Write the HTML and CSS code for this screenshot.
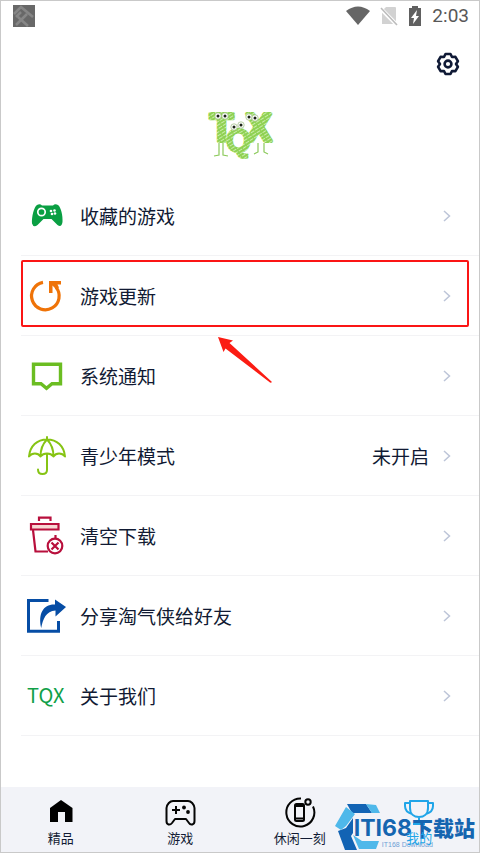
FILE: index.html
```html
<!DOCTYPE html>
<html lang="zh-CN">
<head>
<meta charset="utf-8">
<meta name="viewport" content="width=device-width, initial-scale=1">
<title>我的</title>
<link rel="stylesheet" href="styles.css">
</head>
<body>
<div class="app">
  <header class="status">
    <svg class="status-app" width="22" height="22" viewBox="0 0 22 22" aria-hidden="true"><path fill="#686868" d="M0 0h22v22H0z"/><path d="M1 9 8 2l12 10M3 12l5-5M14 9 3 20M5 12l10 9" fill="none" stroke="#868686" stroke-width="2.6"/></svg>
    <div class="status-icons">
      <svg width="24" height="20" viewBox="0 0 24 20" aria-hidden="true"><path fill="#666" d="M0 5Q12-4 24 5L12 19z"/></svg>
      <svg width="18" height="20" viewBox="0 0 18 20" aria-hidden="true"><path fill="#d2d2d2" d="M6 1h9q1 0 1 1v16H2V5z"/><path d="m0 2 17 17" stroke="#fff" stroke-width="4"/><path d="m1 2 16 17" stroke="#bcbcbc" stroke-width="1.6"/></svg>
      <svg width="14" height="20" viewBox="0 0 14 20" aria-hidden="true"><path fill="#606060" d="M4 0h6v2h3v18H1V2h3z"/><path fill="#fff" d="m9 4-6 8h3l-1 6 6-8H8z"/></svg>
      <time class="clock">2:03</time>
    </div>
  </header>
  <div class="toolbar">
    <button class="settings" type="button" aria-label="设置">
      <svg width="26" height="26" viewBox="0 0 26 26" fill="none" stroke="#101a36" aria-hidden="true"><path stroke-width="2.600" stroke-linejoin="round" d="M10.500 3h5L17 6l3.400-.1 2.500 4.300L21 13l1.900 2.800-2.500 4.300L17 20l-1.500 3h-5L9 20l-3.400.1-2.500-4.300L5 13l-1.900-2.800 2.500-4.300L9 6z"/><circle cx="13" cy="13" r="3.400" stroke-width="2.600"/></svg>
    </button>
  </div>
  <main class="main">
    <div class="brand">
      <svg width="80" height="56" viewBox="-4 0 80 56" role="img" aria-label="TQX">
        <defs><pattern id="hatch" width="5" height="3" patternUnits="userSpaceOnUse" patternTransform="rotate(-32)"><path fill="#8fd152" d="M0 0h5v3H0z"/><path fill="#c9ecab" d="M0 0h4v1H0z"/></pattern></defs>
        <g fill="url(#hatch)" stroke="url(#hatch)" stroke-linejoin="round" class="brand-letters">
          <text x="6" y="36" font-size="38" stroke-width="4">T</text>
          <text x="22" y="46" font-size="32" stroke-width="2">Q</text>
          <text x="42" y="36" font-size="38" stroke-width="4">X</text>
        </g>
        <g fill="#fff" stroke="#9bbb80" stroke-width=".7"><circle cx="14" cy="11" r="3.200"/><circle cx="21" cy="11" r="3.200"/><circle cx="30" cy="22" r="3.200"/><circle cx="37" cy="20" r="3.200"/><circle cx="45" cy="12" r="3.200"/><circle cx="51" cy="13" r="3.200"/></g>
        <g fill="#1c2416"><circle cx="14" cy="11" r="1.500"/><circle cx="21" cy="11" r="1.500"/><circle cx="30" cy="22" r="1.500"/><circle cx="37" cy="20" r="1.500"/><circle cx="45" cy="12" r="1.500"/><circle cx="51" cy="13" r="1.500"/></g>
        <path fill="none" stroke="#8bc95a" stroke-width="1.200" d="M15 38v12l-5 1M19 38v12l5 1M54 38v9l-4 2M60 38v9l4 2"/>
      </svg>
    </div>
    <ul class="menu">
      <li class="item"><a class="row" href="#favorites">
        <svg class="icon" viewBox="0 0 40 40" aria-hidden="true"><path fill="#0a9f43" d="M10 9q3-1.500 5 .5h11q2-2 5-.5c3 2 5 11 4.500 17q-1 6-5 3l-6-6h-8l-6 6q-4 3-5.500-1.500C4.500 21 7 11 10 9z"/><circle cx="14.500" cy="16" r="3.700" fill="none" stroke="#fff" stroke-width="1.700"/><g fill="#fff"><circle cx="24" cy="15" r="1.300"/><circle cx="27.500" cy="14.500" r="1.300"/><circle cx="25" cy="18" r="1.300"/><circle cx="28" cy="17.500" r="1.300"/></g></svg>
        <span class="label">收藏的游戏</span>
        <svg class="chevron" viewBox="0 0 8 12" aria-hidden="true"><path d="m1 1 5.500 5L1 11"/></svg></a></li>
      <li class="item item-marked"><a class="row" href="#updates">
        <svg class="icon" viewBox="0 0 40 40" aria-hidden="true"><path fill="none" stroke="#ef7308" stroke-width="3.200" d="M16 6.400A13.800 13.800 0 1 0 29 11.200"/><path fill="#ef7308" d="M22 5h12v3.600h-3.500l1.500 3-3 1.600-3.500-3.600v7.400H22z"/></svg>
        <span class="label">游戏更新</span>
        <svg class="chevron" viewBox="0 0 8 12" aria-hidden="true"><path d="m1 1 5.500 5L1 11"/></svg></a>
        <svg class="pointer" viewBox="0 0 54 46" aria-hidden="true"><path fill="#fb1c13" d="m0 0 15 3.500-3.500 2.500L54 45q-1 1-2 .5L7.500 11.500 5.500 15z"/></svg></li>
      <li class="item"><a class="row" href="#notices">
        <svg class="icon" viewBox="0 0 40 40" aria-hidden="true"><path fill="none" stroke="#6bbd22" stroke-width="3.400" d="M6.500 8.200h27v19.500H25l-5.500 4.500-5.500-4.500H6.500z"/></svg>
        <span class="label">系统通知</span>
        <svg class="chevron" viewBox="0 0 8 12" aria-hidden="true"><path d="m1 1 5.500 5L1 11"/></svg></a></li>
      <li class="item"><a class="row" href="#teen">
        <svg class="icon" viewBox="0 0 40 40" fill="none" stroke="#86c414" stroke-width="2" stroke-linecap="round" stroke-linejoin="round" aria-hidden="true"><path d="M2 20.500C3 10 10 3.500 20 3.500S37 10 38 20.500c-3-4-9-4-11.500 0-3-4-10-4-13 0-2.500-4-8.500-4-11.500 0zM20 1v2.500M20 17.500V34q0 4-4.500 4T11 33.500M20 3.500c-4 4-6.500 9-6.500 17M20 3.500c4 4 6.500 9 6.500 17"/></svg>
        <span class="label">青少年模式</span><span class="value">未开启</span>
        <svg class="chevron" viewBox="0 0 8 12" aria-hidden="true"><path d="m1 1 5.500 5L1 11"/></svg></a></li>
      <li class="item"><a class="row" href="#clear">
        <svg class="icon" viewBox="0 0 40 40" fill="none" stroke="#b80f3c" stroke-width="2.200" aria-hidden="true"><path d="M12 5V1.700h11.500V5"/><path fill="#f7d6d3" d="M4 8h27.500v5.500H4z"/><path d="m6 14 2.500 21.500H21M28.500 19v4"/><circle cx="28" cy="30" r="7.300"/><path d="m24.500 26.500 7 7m0-7-7 7"/></svg>
        <span class="label">清空下载</span>
        <svg class="chevron" viewBox="0 0 8 12" aria-hidden="true"><path d="m1 1 5.500 5L1 11"/></svg></a></li>
      <li class="item"><a class="row" href="#share">
        <svg class="icon" viewBox="0 0 40 40" aria-hidden="true"><path fill="none" stroke="#064da5" stroke-width="3" d="M21.500 4.500h-20v30.700h30V25"/><path fill="#064da5" d="M28 3.500 39 11l-10.500 9.500v-6C19 15 16 23 14.200 32 11 18 16 8 28 8.500z"/></svg>
        <span class="label">分享淘气侠给好友</span>
        <svg class="chevron" viewBox="0 0 8 12" aria-hidden="true"><path d="m1 1 5.500 5L1 11"/></svg></a></li>
      <li class="item"><a class="row" href="#about">
        <span class="icon icon-text">TQX</span>
        <span class="label">关于我们</span>
        <svg class="chevron" viewBox="0 0 8 12" aria-hidden="true"><path d="m1 1 5.500 5L1 11"/></svg></a></li>
    </ul>
  </main>
  <nav class="tabs">
    <a class="tab" href="#home"><svg width="32" height="32" viewBox="0 0 32 32" aria-hidden="true"><path d="M16 4 27.500 12v14H20V16h-7v10H5V12z"/></svg>精品</a>
    <a class="tab" href="#games"><svg width="32" height="32" viewBox="0 0 32 32" fill="none" stroke="#050505" stroke-width="2" stroke-linejoin="round" aria-hidden="true"><path d="M9 5h15c3 0 6 3 6.500 7v13c0 4-4 4.500-5.500 2l-3-4H11l-3 4c-2 2.500-5.500 2-5.500-2V12C3 8 6 5 9 5z"/><path d="M12 10v8M8 14h8"/><g fill="#050505" stroke="none"><circle cx="20" cy="11.500" r="1.900"/><circle cx="24" cy="16" r="1.900"/></g></svg>游戏</a>
    <a class="tab" href="#leisure"><svg width="32" height="32" viewBox="0 0 32 32" fill="none" stroke="#050505" stroke-width="2" aria-hidden="true"><path d="M17 2.500a14 14 0 1 0 12 8"/><circle cx="24" cy="6" r="2.700"/><rect x="11" y="8" width="9" height="17" rx="1.500"/><path d="M11 22.500h9M11 10h9"/></svg>休闲一刻</a>
    <a class="tab tab-active" href="#mine" aria-current="page"><svg width="32" height="32" viewBox="0 0 32 32" fill="none" stroke="#20a5e8" stroke-width="2" stroke-linejoin="round" aria-hidden="true"><path d="M7 5h18v7c0 6-4 9-9 9s-9-3-9-9zM7 7H2v3q0 6 7 8M25 7h5v3q0 6-7 8M16 21v7M10 28h12"/></svg><span class="tab-front">我的</span></a>
    <div class="mark">
      <svg width="46" height="48" viewBox="0 0 46 48" aria-hidden="true"><path fill="#1263b4" d="M12 1h19l6 9H17zM11 25l7-10v15l-2 3 6 14H10L3 28z"/><path fill="#4fb8ea" d="m31 1 10 1 4 8h-8zM11 4l9 7-9 12-5 4-6-4zM18 32l9 6h17l-3 8H24z"/></svg>
      <div class="mark-text"><b class="mark-name">ITI68<span class="mark-cn">下载站</span></b><small class="mark-sub">IT168 Download</small></div>
    </div>
  </nav>
</div>
</body>
</html>
```
FILE: styles.css
```css
* { box-sizing: border-box; }
body {
  margin: 0;
  background: #fff;
  color: #111a33;
  font-family: "Noto Sans CJK SC", sans-serif;
}
svg { display: block; }
a { color: inherit; text-decoration: none; }
.app {
  display: flex;
  flex-direction: column;
  min-height: 100vh;
  border: 1px solid #c9c9c9;
}
.status {
  display: flex;
  justify-content: space-between;
  align-items: center;
  height: 30px;
  padding: 0 10px 0 12px;
}
.status-icons { display: flex; align-items: center; gap: 10px; }
.clock { font: 19px/22px Roboto, sans-serif; color: #585858; }
.toolbar {
  display: flex;
  justify-content: flex-end;
  padding: 20px 18px 0;
}
.settings { padding: 0; border: 0; background: none; cursor: pointer; }
.main { flex: 1; }
.brand { display: flex; justify-content: center; padding: 28px 0 15px; }
.brand-letters { font-family: "Liberation Sans", sans-serif; font-weight: 700; }
.menu { list-style: none; margin: 0; padding: 0 0 0 20px; }
.item { position: relative; box-shadow: inset 0 -1px #f3f3f5; }
.row {
  display: flex;
  align-items: center;
  height: 80px;
  padding: 0 28px 0 6px;
}
.icon { flex: none; width: 40px; height: 40px; margin-right: 13px; }
.icon-text { font-size: 20px; line-height: 38px; color: #10a048; }
.label { flex: 1; }
.label, .value { font-size: 19px; line-height: 28px; }
.value { margin-right: 14px; }
.chevron {
  width: 8px;
  height: 12px;
  fill: none;
  stroke: #bdc5d8;
  stroke-width: 1.5;
}
.item-marked::after {
  content: "";
  position: absolute;
  inset: 4px 10px 9px 0;
  border: 2px solid #fb1515;
  border-radius: 2px;
  pointer-events: none;
}
.pointer {
  position: absolute;
  z-index: 1;
  left: 197px;
  top: 81px;
  width: 54px;
  height: 46px;
}
.tabs {
  position: relative;
  display: grid;
  grid-template-columns: repeat(4, 1fr);
  background: #f2f3f8;
}
.tab {
  display: flex;
  flex-direction: column;
  align-items: center;
  padding: 9px 0 4px;
  font-size: 13px;
  line-height: 20px;
}
.tab-active { color: #20a5e8; }
.tab-front { position: relative; z-index: 2; }
.mark {
  position: absolute;
  z-index: 1;
  right: 4px;
  bottom: 1px;
  display: flex;
  pointer-events: none;
}
.mark-text { margin: 12px 0 0 -27px; }
.mark-name {
  display: block;
  font: 700 23px/24px Inter, sans-serif;
  color: #1565b0;
}
.mark-cn { font: 900 21px/24px "Noto Sans CJK SC", sans-serif; }
.mark-sub {
  display: block;
  margin-left: 28px;
  font: 7px/10px "Liberation Sans", sans-serif;
  color: #6f9fd5;
}
```
